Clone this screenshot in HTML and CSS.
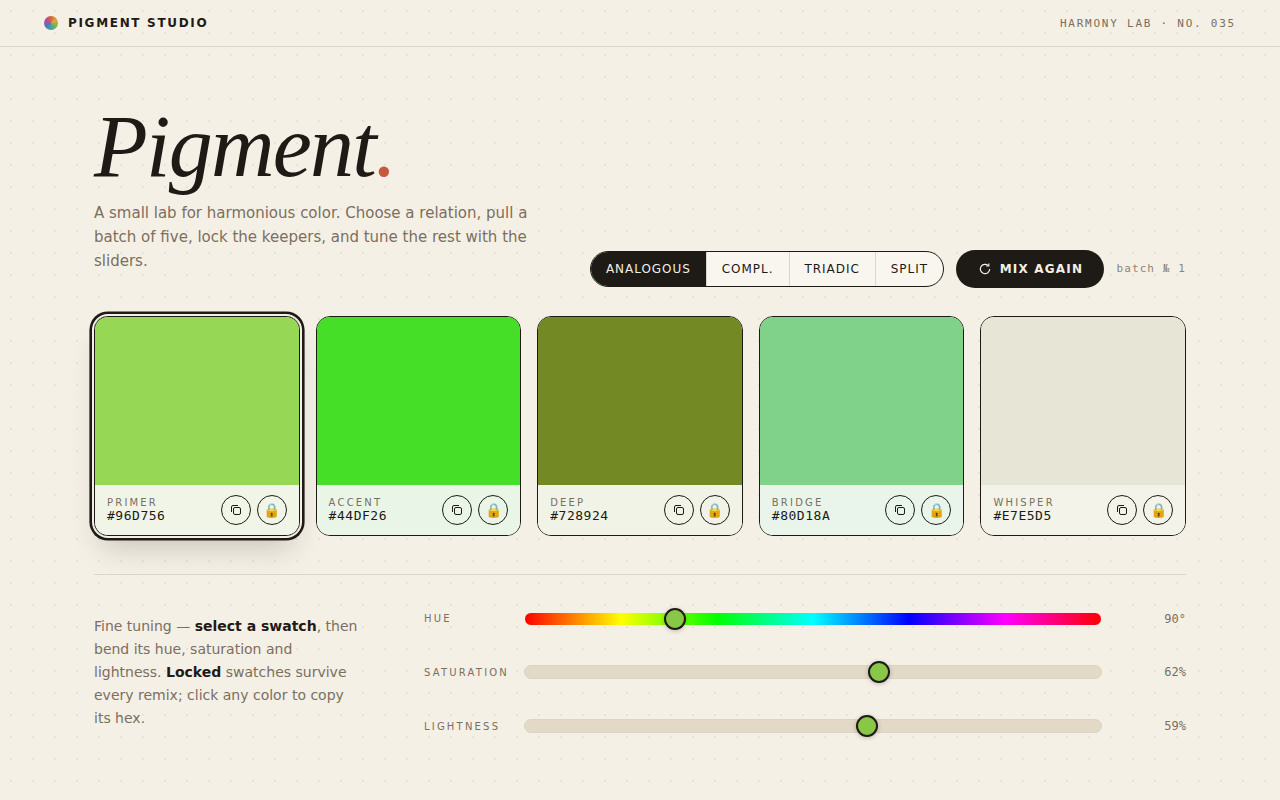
FILE: index.html
```html
<!doctype html>
<html>

<head>
    <meta charset="utf-8">
    <title>Pigment Studio</title>
    <link rel="stylesheet" href="styles.css">
</head>

<body>
    <header class="topbar">
        <div class="brand">
            <span class="brand-dot"></span>
            <span class="brand-name">PIGMENT STUDIO</span>
        </div>
        <div class="edition">HARMONY LAB · NO. 035</div>
    </header>

    <main class="page">
        <section class="hero">
            <div class="intro">
                <h1 class="title">Pigment<span class="title-dot">.</span></h1>
                <p class="lede">A small lab for harmonious color. Choose a relation, pull a batch of five, lock the keepers, and tune the rest with the sliders.</p>
            </div>
            <div class="controls">
                <div class="segments">
                    <button class="segment active">ANALOGOUS</button>
                    <button class="segment">COMPL.</button>
                    <button class="segment">TRIADIC</button>
                    <button class="segment">SPLIT</button>
                </div>
                <button class="mix">
                    <svg class="mix-icon" viewBox="0 0 24 24" width="14" height="14">
                        <path d="M20 12a8 8 0 1 1-2.5-5.8" />
                        <path d="M18.5 2.5v4.4h-4.4" />
                    </svg>
                    MIX AGAIN
                </button>
                <span class="batch">batch № 1</span>
            </div>
        </section>

        <section class="swatches">
            <article class="card selected">
                <div class="chip" style="background: #96D756"></div>
                <div class="card-foot" style="background: #f0f5e8">
                    <div class="meta"><span class="role">PRIMER</span><span class="hex">#96D756</span></div>
                    <div class="actions">
                        <button class="round"><svg class="copy" viewBox="0 0 12 12" width="12" height="12"><rect x="3.5" y="3.5" width="7" height="7" rx="1.5" /><path d="M1.5 8V3a1.5 1.5 0 0 1 1.5-1.5h5" /></svg></button>
                        <button class="round lock">🔒</button>
                    </div>
                </div>
            </article>
            <article class="card">
                <div class="chip" style="background: #44DF26"></div>
                <div class="card-foot" style="background: #e9f6e7">
                    <div class="meta"><span class="role">ACCENT</span><span class="hex">#44DF26</span></div>
                    <div class="actions">
                        <button class="round"><svg class="copy" viewBox="0 0 12 12" width="12" height="12"><rect x="3.5" y="3.5" width="7" height="7" rx="1.5" /><path d="M1.5 8V3a1.5 1.5 0 0 1 1.5-1.5h5" /></svg></button>
                        <button class="round lock">🔒</button>
                    </div>
                </div>
            </article>
            <article class="card">
                <div class="chip" style="background: #728924"></div>
                <div class="card-foot" style="background: #f0f3e6">
                    <div class="meta"><span class="role">DEEP</span><span class="hex">#728924</span></div>
                    <div class="actions">
                        <button class="round"><svg class="copy" viewBox="0 0 12 12" width="12" height="12"><rect x="3.5" y="3.5" width="7" height="7" rx="1.5" /><path d="M1.5 8V3a1.5 1.5 0 0 1 1.5-1.5h5" /></svg></button>
                        <button class="round lock">🔒</button>
                    </div>
                </div>
            </article>
            <article class="card">
                <div class="chip" style="background: #80D18A"></div>
                <div class="card-foot" style="background: #e9f5ea">
                    <div class="meta"><span class="role">BRIDGE</span><span class="hex">#80D18A</span></div>
                    <div class="actions">
                        <button class="round"><svg class="copy" viewBox="0 0 12 12" width="12" height="12"><rect x="3.5" y="3.5" width="7" height="7" rx="1.5" /><path d="M1.5 8V3a1.5 1.5 0 0 1 1.5-1.5h5" /></svg></button>
                        <button class="round lock">🔒</button>
                    </div>
                </div>
            </article>
            <article class="card">
                <div class="chip" style="background: #E7E5D5"></div>
                <div class="card-foot" style="background: #f3f3ea">
                    <div class="meta"><span class="role">WHISPER</span><span class="hex">#E7E5D5</span></div>
                    <div class="actions">
                        <button class="round"><svg class="copy" viewBox="0 0 12 12" width="12" height="12"><rect x="3.5" y="3.5" width="7" height="7" rx="1.5" /><path d="M1.5 8V3a1.5 1.5 0 0 1 1.5-1.5h5" /></svg></button>
                        <button class="round lock">🔒</button>
                    </div>
                </div>
            </article>
        </section>

        <section class="tuning">
            <p class="note">Fine tuning — <b>select a swatch</b>, then bend its hue, saturation and lightness. <b>Locked</b> swatches survive every remix; click any color to copy its hex.</p>
            <div class="sliders">
                <label class="slider-row">
                    <span class="slider-name">HUE</span>
                    <input class="range hue" type="range" min="0" max="360" value="90">
                    <span class="slider-value">90°</span>
                </label>
                <label class="slider-row">
                    <span class="slider-name">SATURATION</span>
                    <input class="range" type="range" min="0" max="100" value="62">
                    <span class="slider-value">62%</span>
                </label>
                <label class="slider-row">
                    <span class="slider-name">LIGHTNESS</span>
                    <input class="range" type="range" min="0" max="100" step="0.1" value="59.7">
                    <span class="slider-value">59%</span>
                </label>
            </div>
        </section>
    </main>
</body>

</html>
```

FILE: styles.css
```css
* {
    box-sizing: border-box;
    margin: 0;
}

html,
body {
    height: 100%;
}

body {
    background-color: #f5f0e6;
    background-image: radial-gradient(circle, #e9e3d6 1px, transparent 1px);
    background-size: 22px 22px;
    background-position: 0 0;
    color: #1e1a15;
    font-family: "DejaVu Sans", sans-serif;
    overflow: hidden;
}

/* top bar */
.topbar {
    height: 47px;
    padding: 0 44px;
    border-bottom: 1px solid #ddd6c8;
    display: flex;
    align-items: center;
    justify-content: space-between;
}

.brand {
    display: flex;
    align-items: center;
    gap: 10px;
}

.brand-dot {
    width: 14px;
    height: 14px;
    border-radius: 50%;
    background: conic-gradient(#d9603f, #e0a93b, #7fb24f, #3fa3a0, #5a6fc0, #b0509a, #d9603f);
}

.brand-name {
    font-size: 12px;
    font-weight: 700;
    letter-spacing: 1.68px;
}

.edition {
    font-family: "DejaVu Sans Mono", monospace;
    font-size: 11px;
    letter-spacing: 1.76px;
    color: #7a6f60;
}

/* hero */
.page {
    padding: 47px 94px 0;
}

.hero {
    display: flex;
    align-items: flex-end;
    justify-content: space-between;
}

.intro {
    width: 440px;
    padding-bottom: 15px;
}

.title {
    font-family: "Liberation Serif", serif;
    font-style: italic;
    font-weight: 400;
    font-size: 88px;
    line-height: 106px;
    letter-spacing: -1.76px;
}

.title-dot {
    color: #c9573c;
}

.lede {
    margin-top: 1px;
    font-size: 15px;
    line-height: 24px;
    color: #7a6f60;
}

.controls {
    display: flex;
    align-items: center;
}

.segments {
    display: flex;
    height: 36px;
    border: 1px solid #1e1a15;
    border-radius: 18px;
    overflow: hidden;
    background: #f9f6f0;
}

.segment {
    border: none;
    border-left: 1px solid #ddd6c8;
    background: none;
    padding: 0 15.5px 0 14.5px;
    font-family: "DejaVu Sans", sans-serif;
    font-size: 12px;
    letter-spacing: 0.96px;
    color: #1e1a15;
}

.segment.active {
    border-left: none;
    background: #1e1a15;
    color: #f4efe6;
}

.mix {
    height: 38px;
    width: 148px;
    margin-left: 12px;
    border: none;
    border-radius: 19px;
    background: #1e1a15;
    color: #f4efe6;
    font-family: "DejaVu Sans", sans-serif;
    font-size: 12px;
    font-weight: 700;
    letter-spacing: 1.2px;
    display: flex;
    align-items: center;
    justify-content: center;
    gap: 8px;
}

.mix-icon {
    fill: none;
    stroke: #f4efe6;
    stroke-width: 2;
}

.batch {
    margin-left: 12px;
    margin-bottom: 2px;
    font-family: "DejaVu Sans Mono", monospace;
    font-size: 11px;
    letter-spacing: 1.1px;
    color: #8f8576;
}

/* swatch cards */
.swatches {
    margin-top: 28px;
    display: grid;
    grid-template-columns: repeat(5, 1fr);
    gap: 16px;
}

.card {
    height: 220px;
    border: 1px solid #1e1a15;
    border-radius: 14px;
    overflow: hidden;
    display: flex;
    flex-direction: column;
}

.card.selected {
    box-shadow: 0 0 0 2px #f5f0e6, 0 0 0 4.6px #1e1a15, 0 18px 30px -8px rgba(30, 26, 21, 0.22);
}

.chip {
    height: 168px;
}

.card-foot {
    flex: 1;
    padding: 0 12px;
    display: flex;
    align-items: center;
    justify-content: space-between;
}

.meta {
    display: flex;
    flex-direction: column;
    margin-bottom: 2px;
}

.role {
    font-size: 10px;
    line-height: 13px;
    letter-spacing: 2.2px;
    color: #7a6f60;
}

.hex {
    font-family: "DejaVu Sans Mono", monospace;
    font-size: 13px;
    line-height: 14px;
    letter-spacing: 0.52px;
}

.actions {
    display: flex;
    gap: 6px;
}

.round {
    width: 30px;
    height: 30px;
    padding: 0;
    border: 1px solid #1e1a15;
    border-radius: 50%;
    background: none;
    display: flex;
    align-items: center;
    justify-content: center;
}

.copy {
    fill: none;
    stroke: #1e1a15;
    stroke-width: 1;
}

.lock {
    font-size: 14px;
}

/* fine tuning */
.tuning {
    margin-top: 38px;
    padding-top: 32px;
    border-top: 1px solid #ddd6c8;
    display: grid;
    grid-template-columns: 266px 1fr;
    gap: 64px;
}

.note {
    font-size: 14px;
    line-height: 23px;
    color: #7a6f60;
    padding-top: 8px;
}

.note b {
    color: #1e1a15;
}

.sliders {
    display: flex;
    flex-direction: column;
    gap: 31px;
}

.slider-row {
    height: 23px;
    display: grid;
    grid-template-columns: 100px 578px 1fr;
    align-items: center;
}

.slider-name {
    font-size: 10px;
    letter-spacing: 2.2px;
    color: #7a6f60;
}

.slider-value {
    font-family: "DejaVu Sans Mono", monospace;
    font-size: 12px;
    color: #7a6f60;
    text-align: right;
}

.range {
    -webkit-appearance: none;
    appearance: none;
    width: 578px;
    height: 14px;
    margin: 0 0 2px;
    border: 1px solid #ddd3c1;
    border-radius: 7px;
    background: #e2d9c6;
}

.range + .slider-value {
    margin-bottom: 2px;
}

.range.hue {
    margin: 0;
    border: 1px solid #f5f0e6;
    background: linear-gradient(90deg, #f00, #ff0, #0f0, #0ff, #00f, #f0f, #f00);
}

.range.hue + .slider-value {
    margin-bottom: 0;
}

.range::-webkit-slider-thumb {
    -webkit-appearance: none;
    width: 22px;
    height: 22px;
    border: 2px solid #1e1a15;
    border-radius: 50%;
    background: #88c846;
    box-shadow: 0 1px 4px rgba(30, 26, 21, 0.25);
}
```
